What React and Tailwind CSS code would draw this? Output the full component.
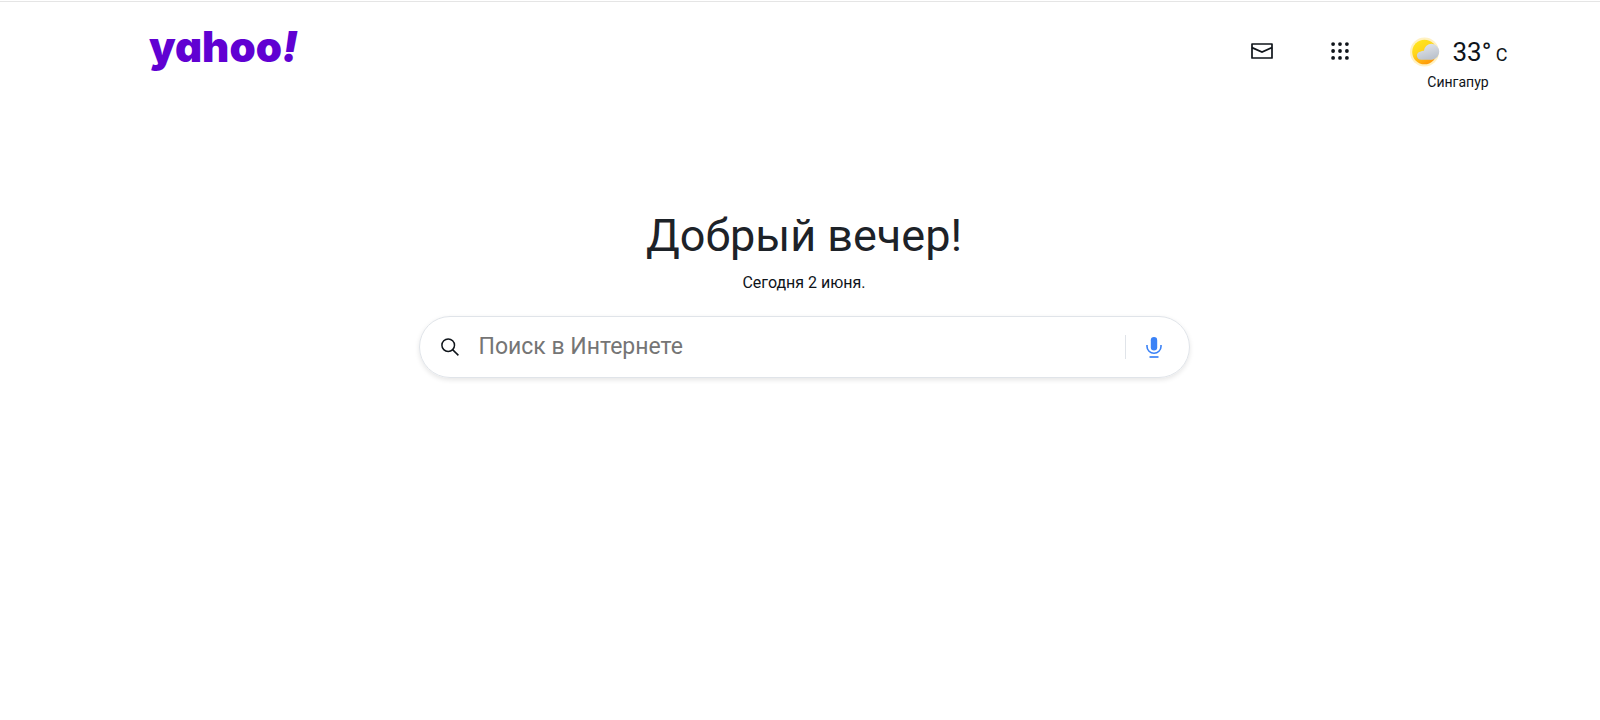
import { useState } from "react";

function Logo() {
  return (
    <a
      href="#"
      aria-label="yahoo!"
      className="flex font-[Inter,sans-serif] text-[42px] leading-[42px] font-black text-[#6001d2] [font-feature-settings:'cv11']"
    >
      <span>yahoo</span>
      <span className="italic">!</span>
    </a>
  );
}

function MailIcon() {
  return (
    <svg width="22" height="16" viewBox="0 0 22 16" fill="none" stroke="#0f141a" strokeWidth="1.7">
      <path d="M1 1h20v14H1z" strokeLinejoin="round" />
      <path d="M1 4.6l10 4.4 10-4.4" />
    </svg>
  );
}

function AppsIcon() {
  const dots = [2, 8.6, 15.2];
  return (
    <svg width="18" height="18" viewBox="0 0 17.2 17.2" fill="#0f141a">
      {dots.map((y) => dots.map((x) => <circle key={x + "-" + y} cx={x} cy={y} r="1.8" />))}
    </svg>
  );
}

function WeatherIcon() {
  return (
    <svg width="30" height="30" viewBox="0 0 30 30">
      <defs>
        <linearGradient id="sun" x1="0" y1="0" x2="0.5" y2="1">
          <stop offset="0" stopColor="#ffea1f" />
          <stop offset="0.5" stopColor="#ffd61c" />
          <stop offset="1" stopColor="#ff9d0a" />
        </linearGradient>
        <linearGradient id="cloud" x1="0" y1="0" x2="0.4" y2="1">
          <stop offset="0" stopColor="#e6e9ee" />
          <stop offset="1" stopColor="#bcc3cd" />
        </linearGradient>
      </defs>
      <circle cx="14.5" cy="15" r="14.5" fill="#fff1c2" />
      <circle cx="14.5" cy="15" r="12.3" fill="url(#sun)" />
      <path
        d="M11.3 22.8a4.2 4.2 0 0 1-.4-8.4 4 4 0 0 1 3-.6 7.8 7.8 0 0 1 7.9-7.1 8.1 8.1 0 0 1 .4 16.1z"
        fill="url(#cloud)"
      />
    </svg>
  );
}

function SearchIcon() {
  return (
    <svg width="18" height="18" viewBox="0 0 18 18" fill="none" stroke="#0f141a" strokeWidth="1.5">
      <circle cx="7.2" cy="7.2" r="6.3" />
      <path d="M11.6 11.6l5.8 5.8" />
    </svg>
  );
}

function MicIcon() {
  return (
    <svg width="16" height="21" viewBox="0 0 16 21" fill="none">
      <rect x="4.8" y="0" width="6.4" height="13.4" rx="3.2" fill="#3b82f6" />
      <path d="M1 8v1.5a7 6.7 0 0 0 14 0V8" stroke="#3b82f6" strokeWidth="1.6" />
      <path d="M3.5 20h9" stroke="#3b82f6" strokeWidth="1.7" />
    </svg>
  );
}

function Header() {
  return (
    <header className="flex items-start justify-between pt-6 pr-20 pl-[149px]">
      <Logo />
      <nav className="flex items-start">
        <a href="#mail" aria-label="Почта" className="mr-[58px] flex h-[50px] items-center">
          <MailIcon />
        </a>
        <button type="button" aria-label="Приложения" className="mr-[51px] flex h-[50px] items-center">
          <AppsIcon />
        </button>
        <a href="#weather" className="flex w-[120px] flex-col items-center">
          <span className="flex h-[50px] items-center gap-3 pt-0.5 pr-0.5">
            <WeatherIcon />
            <span className="text-[26px] leading-8">
              33° <span className="-ml-0.5 text-lg">C</span>
            </span>
          </span>
          <span className="pr-1 text-sm leading-3">Сингапур</span>
        </a>
      </nav>
    </header>
  );
}

export default function App() {
  const [query, setQuery] = useState("");

  return (
    <div className="mt-px border-t border-[#e5e5e5] bg-white font-[Roboto,sans-serif] text-[#0f141a]">
      <Header />
      <main className="flex flex-col items-center pt-[121px] pb-20 pl-2">
        <h1 className="text-[45px] leading-[54px] text-[#1d2228]">Добрый вечер!</h1>
        <p className="mt-2 text-base leading-6">Сегодня 2 июня.</p>
        <form
          role="search"
          onSubmit={(e) => e.preventDefault()}
          className="mt-[21px] flex h-[62px] w-full max-w-[771px] items-center rounded-full border border-[#e0e4e9] pr-[27px] pl-[21px] shadow-[0_2px_5px_rgba(0,0,0,0.1)]"
        >
          <button type="submit" aria-label="Найти">
            <SearchIcon />
          </button>
          <input
            type="text"
            aria-label="Поиск в Интернете"
            placeholder="Поиск в Интернете"
            value={query}
            onChange={(e) => setQuery(e.target.value)}
            className="ml-5 min-w-0 flex-1 text-[23px] leading-8 outline-none placeholder:text-[#757575]"
          />
          <span className="h-6 w-px bg-[#e0e4e9]" />
          <button type="button" aria-label="Голосовой поиск" className="ml-5">
            <MicIcon />
          </button>
        </form>
      </main>
    </div>
  );
}
